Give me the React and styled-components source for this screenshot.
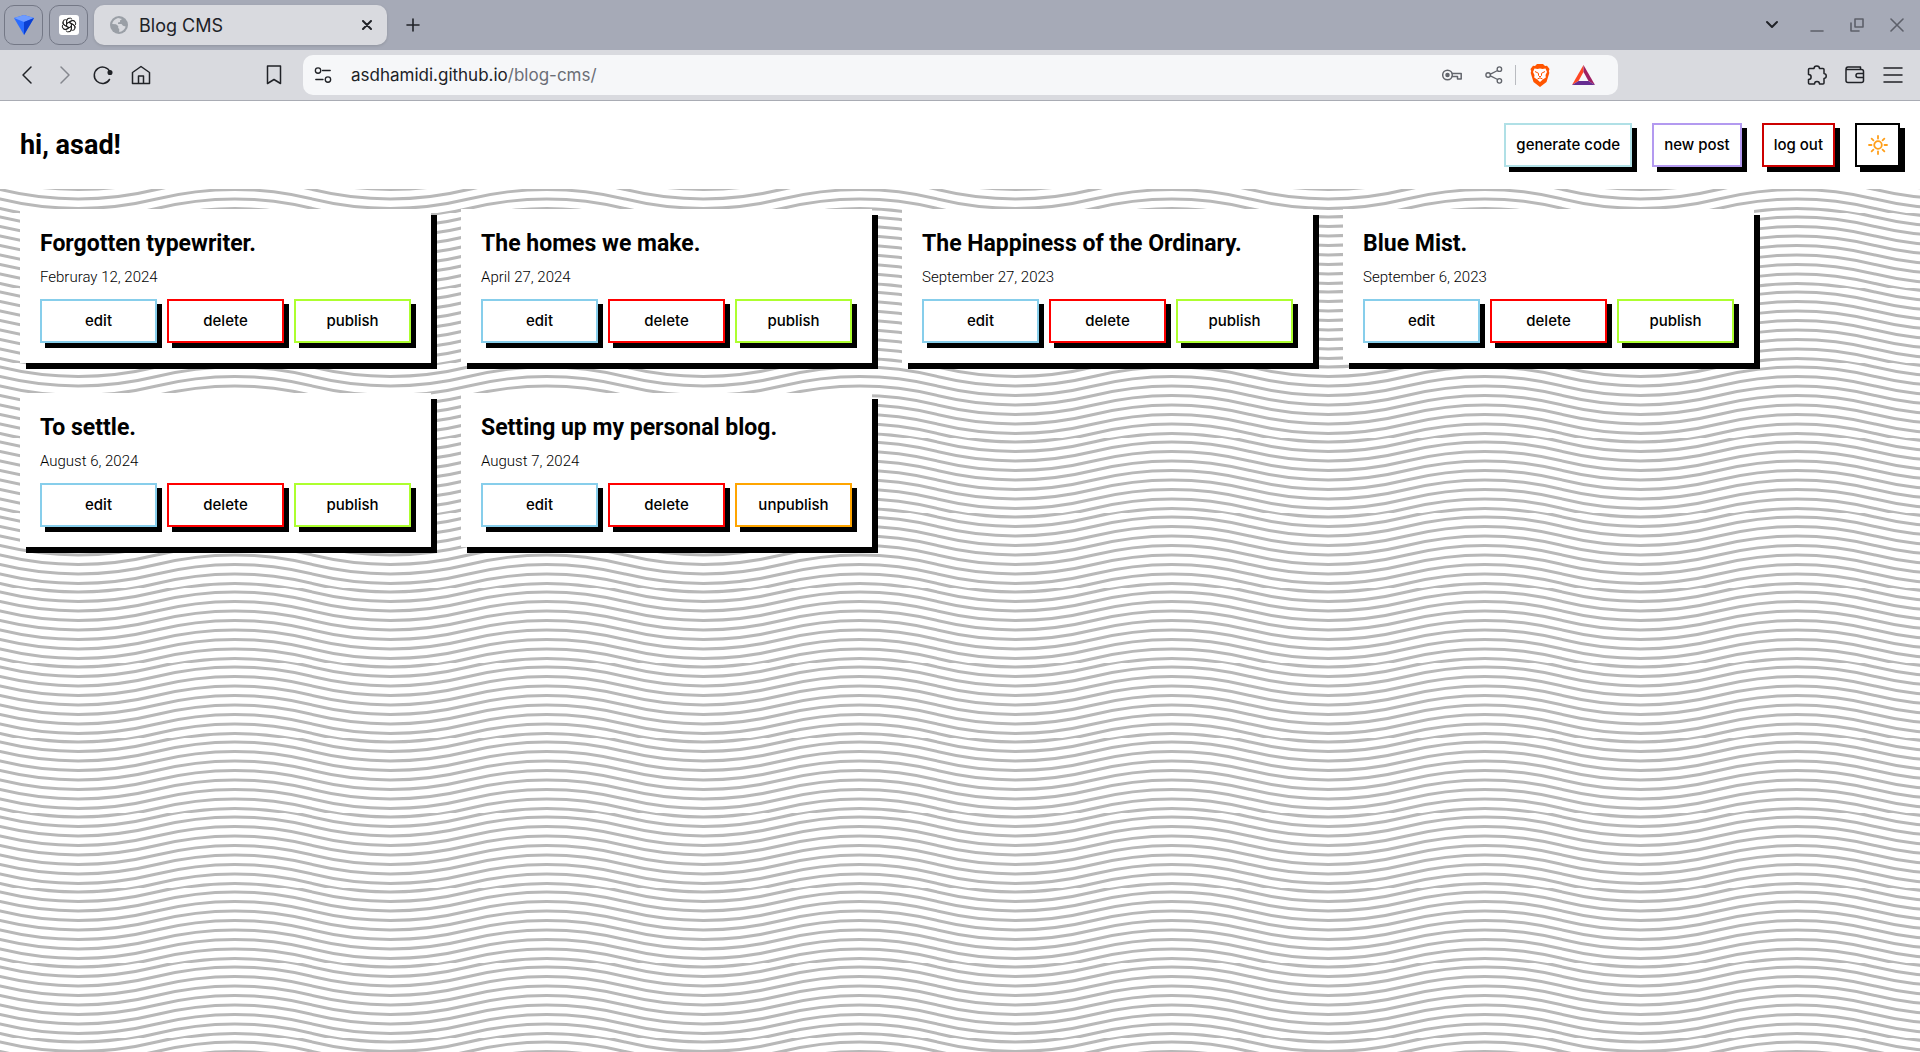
import React from "react";
import styled, { createGlobalStyle } from "styled-components";

const curves = Array.from({ length: 13 }, (_, i) => {
  const y = (4 + (i - 2) * 9.5) / 3.125;
  return `M-50 ${y}q25 -6.08 50 0t50 0t50 0t50 0`;
}).join("");
const waves = `url("data:image/svg+xml,${encodeURIComponent(
  `<svg xmlns='http://www.w3.org/2000/svg' width='100' height='24' viewBox='0 0 100 24'><path d='${curves}' fill='none' stroke='#b8b8b8' stroke-width='1'/></svg>`
)}")`;

const Global = createGlobalStyle`
  *, *::before, *::after { box-sizing: border-box; }
  body { margin: 0; background: #fff; color: #000; font-family: Roboto, "Liberation Sans", sans-serif; }
  button { font: inherit; color: inherit; }
  h1, h2, p { margin: 0; }
`;

const Window = styled.div`
  display: flex;
  flex-direction: column;
  min-height: 100vh;
`;

const TabStrip = styled.div`
  display: flex;
  align-items: center;
  height: 50px;
  padding: 0 4px;
  gap: 6px;
  background: #a6aab7;
  color: #202227;
`;

const PinnedTab = styled.button`
  display: grid;
  place-items: center;
  width: 39px;
  height: 40px;
  padding: 0;
  border: 1px solid #747886;
  border-radius: 10px;
  background: transparent;
`;

const Tab = styled.div`
  display: flex;
  align-items: center;
  gap: 11px;
  width: 293px;
  height: 40px;
  padding: 0 9px 0 16px;
  border-radius: 10px;
  background: #d9dadf;
  box-shadow: 0 1px 3px #0002;
  font: 18px Inter, sans-serif;
`;

const TabTitle = styled.span`
  flex: 1;
`;

const IconButton = styled.button`
  display: grid;
  place-items: center;
  width: ${(p) => p.$w || 38}px;
  height: 38px;
  padding: 0;
  border: 0;
  background: none;
  color: ${(p) => p.$color || "#202227"};
  svg { display: block; }
`;

const WindowControls = styled.div`
  display: flex;
  gap: 2px;
  margin-left: auto;
`;

const Toolbar = styled.div`
  display: flex;
  align-items: center;
  height: 51px;
  padding: 0 8px;
  border-bottom: 1px solid #a9acb4;
  background: #d9dadf;
`;

const BookmarkSlot = styled.div`
  margin-left: 95px;
  margin-right: 10px;
`;

const AddressBar = styled.div`
  display: flex;
  align-items: center;
  flex: 0 1 1315px;
  height: 40px;
  padding: 0 12px 0 1px;
  border-radius: 10px;
  background: #f6f7f9;
`;

const Address = styled.div`
  flex: 1;
  padding-left: 9px;
  font: 17px/24px Inter, sans-serif;
  color: #202227;
  span { color: #6b6e76; }
`;

const Divider = styled.div`
  width: 1px;
  height: 20px;
  margin-right: 4px;
  background: #b9bbc0;
`;

const ToolbarEnd = styled.div`
  display: flex;
  margin-left: auto;
`;

const Header = styled.header`
  display: flex;
  align-items: center;
  justify-content: space-between;
  height: 88px;
  padding: 0 20px;
  background: #fff;
`;

const Greeting = styled.h1`
  font-size: 27px;
  line-height: 36px;
`;

const Actions = styled.div`
  display: flex;
  gap: 20px;
`;

const Button = styled.button`
  display: grid;
  place-items: center;
  height: 44px;
  min-width: 45px;
  padding: 0 10px;
  border: 2px solid ${(p) => p.$color};
  background: #fff;
  box-shadow: 5px 5px 0 #000;
  font: 500 15px/20px Inter, sans-serif;
`;

const Posts = styled.main`
  flex: 1;
  display: grid;
  grid-template-columns: repeat(auto-fill, 411px);
  align-content: start;
  gap: 30px;
  padding: 20px;
  background: #fff ${waves} 0 24px / auto 75px;
`;

const Card = styled.article`
  display: flex;
  flex-direction: column;
  padding: 20px;
  background: #fff;
  box-shadow: 6px 6px 0 #000;
`;

const Title = styled.h2`
  font-size: 23px;
  line-height: 30px;
`;

const PostDate = styled.p`
  margin: 8px 0 12px;
  font-size: 15px;
  font-weight: 300;
  line-height: 20px;
`;

const CardActions = styled.div`
  display: grid;
  grid-template-columns: repeat(3, 1fr);
  gap: 10px;
`;

const Icon = ({ size = 20, width = 1.5, children, box = 20 }) => (
  <svg width={size} height={size} viewBox={`0 0 ${box} ${box}`} fill="none" stroke="currentColor" strokeWidth={width} strokeLinecap="round" strokeLinejoin="round" aria-hidden="true">
    {children}
  </svg>
);

const posts = [
  ["Forgotten typewriter.", "Februray 12, 2024", false],
  ["The homes we make.", "April 27, 2024", false],
  ["The Happiness of the Ordinary.", "September 27, 2023", false],
  ["Blue Mist.", "September 6, 2023", false],
  ["To settle.", "August 6, 2024", false],
  ["Setting up my personal blog.", "August 7, 2024", true],
];

function Post({ title, date, published }) {
  return (
    <Card>
      <Title>{title}</Title>
      <PostDate>{date}</PostDate>
      <CardActions>
        <Button $color="skyblue">edit</Button>
        <Button $color="red">delete</Button>
        <Button $color={published ? "orange" : "greenyellow"}>{published ? "unpublish" : "publish"}</Button>
      </CardActions>
    </Card>
  );
}

function Browser() {
  return (
    <>
      <TabStrip>
        <PinnedTab aria-label="Pinned tab">
          <svg width="20" height="20" viewBox="0 0 20 20">
            <path d="M0 3 10 0l10 3-10 17z" fill="#2a6cff" />
            <path d="M0 3 10 0l10 3-10 4z" fill="#6f9cff" />
            <path d="M20 3 10 7v13z" fill="#0b3fd0" />
          </svg>
        </PinnedTab>
        <PinnedTab aria-label="Pinned chat tab">
          <svg width="20" height="20" viewBox="0 0 20 20" fill="none" stroke="#222" strokeWidth="1">
            <rect width="20" height="20" rx="3" fill="#fff" stroke="none" />
            {[0, 60, 120, 180, 240, 300].map((a) => (
              <path key={a} transform={`rotate(${a} 10 10)`} d="M7.6 11.4V6.2a3.1 3.1 0 0 1 5.6-1.8M7.6 8.6l4.6-2.7a3 3 0 0 1 3.6.5" />
            ))}
          </svg>
        </PinnedTab>
        <Tab>
          <svg width="18" height="18" viewBox="0 0 18 18">
            <circle cx="9" cy="9" r="9" fill="#9a9fa6" />
            <path d="M8 2c-3 1-5.500 3-5.800 6l3.800.2L8.200 10v2l1 1v3c3-.3 5.800-2.800 6.400-5.500L13 9.700 11.500 8H8V6.500l2-.5V4.500L12 3z" fill="#d9dadf" />
          </svg>
          <TabTitle>Blog CMS</TabTitle>
          <IconButton $w={22} aria-label="Close tab">
            <Icon size={10} box={10} width={2}><path d="m1 1 8 8M9 1 1 9" /></Icon>
          </IconButton>
        </Tab>
        <IconButton $w={40} aria-label="New tab">
          <Icon size={14} box={14} width={1.6}><path d="M7 1v12M1 7h12" /></Icon>
        </IconButton>
        <WindowControls>
          <IconButton $w={48} aria-label="Search tabs"><Icon size={14} box={14} width={2}><path d="m2 4 5 5 5-5" /></Icon></IconButton>
          <IconButton $color="#5d606a" aria-label="Minimize"><Icon size={14} box={14} width={1.6}><path d="M1 13h12" /></Icon></IconButton>
          <IconButton $color="#5d606a" aria-label="Restore"><Icon size={14} box={14} width={1.6}><path d="M5 1h8v8H5zM1 5v8h8" /></Icon></IconButton>
          <IconButton $color="#5d606a" aria-label="Close"><Icon size={14} box={14} width={1.6}><path d="m1 1 12 12M13 1 1 13" /></Icon></IconButton>
        </WindowControls>
      </TabStrip>
      <Toolbar>
        <IconButton aria-label="Back"><Icon><path d="m14 2-8 8 8 8" /></Icon></IconButton>
        <IconButton $color="#85878e" aria-label="Forward"><Icon><path d="m6 2 8 8-8 8" /></Icon></IconButton>
        <IconButton aria-label="Reload"><Icon><path d="M17 7A8.200 8.200 0 1 0 16.500 14.500" /><circle cx="17" cy="7.500" r="1.800" fill="currentColor" /></Icon></IconButton>
        <IconButton aria-label="Home"><Icon><path d="M1.500 7.500 10 1.500l8.500 6v11h-17zM7.500 18v-7h5v7" /></Icon></IconButton>
        <BookmarkSlot>
          <IconButton aria-label="Bookmark"><Icon><path d="M3.500 1h13v17.500l-6.500-4-6.500 4z" /></Icon></IconButton>
        </BookmarkSlot>
        <AddressBar>
          <IconButton aria-label="Site information"><Icon size={18}><circle cx="4.500" cy="5" r="3" /><path d="M9.500 5H18M2 15h8" /><circle cx="15.500" cy="15" r="3" /></Icon></IconButton>
          <Address>asdhamidi.github.io<span>/blog-cms/</span></Address>
          <IconButton $w={42} $color="#62656c" aria-label="Passwords"><Icon><circle cx="5.500" cy="10" r="4.800" /><circle cx="5.500" cy="10" r="1.500" fill="currentColor" /><path d="M10.200 8.500h9v5.500h-3.700v-2.500h-5.300" /></Icon></IconButton>
          <IconButton $w={42} $color="#62656c" aria-label="Share"><Icon size={18}><circle cx="3.500" cy="10" r="2.500" /><circle cx="16" cy="3.500" r="2.500" /><circle cx="16" cy="16.500" r="2.500" /><path d="m6 9 8-4M6 11l8 4" /></Icon></IconButton>
          <Divider />
          <IconButton $w={40} aria-label="Shields">
            <svg width="20" height="23" viewBox="0 0 20 23">
              <path d="m5 2 2-2h6l2 2 2-.2L19.500 5l-.7 2 .5 2-2.800 9L10 23l-6.500-5L.7 9l.5-2-.7-2L3 1.800z" fill="#ff5500" />
              <path d="m4.500 4.500 3 .6L10 4.500l2.500.6 3-.6L17 8l-1.500 3 .3 2.500-3 2L10 18l-2.800-2.500-3-2 .3-2.500L3 8z" fill="#fff" />
              <path d="m5 7.500 3.500 1.800M15 7.500l-3.500 1.800M8.500 9.300v2.200L10 13l1.500-1.500V9.300M7.500 15l2.500-1.200 2.500 1.200" fill="none" stroke="#ff5500" strokeWidth="1" />
            </svg>
          </IconButton>
          <IconButton $w={46} aria-label="Rewards">
            <svg width="23" height="20" viewBox="0 0 23 20">
              <path d="M11.500 0 0 20l6.500-4 5-9z" fill="#ff4724" />
              <path d="M11.500 0 23 20l-6.500-4-5-9z" fill="#9e1f63" />
              <path d="M0 20h23l-6.500-4h-10z" fill="#662d91" />
            </svg>
          </IconButton>
        </AddressBar>
        <ToolbarEnd>
          <IconButton aria-label="Extensions"><Icon><path d="M2.500 3.500H7c0-3.500 5.500-3.500 5.500 0H16q1 0 1 1v4c3 .5 3 4.500 0 5V18q0 1-1 1h-3.500c0-3.500-5-3.500-5 0H2.500q-1 0-1-1v-3.500c3.500 0 3.500-5 0-5v-5q0-1 1-1z" /></Icon></IconButton>
          <IconButton aria-label="Wallet"><Icon><path d="M1 4.500h15.500q2 0 2 2v9q0 2-2 2H3q-2 0-2-2zM1 4.500Q1 2 3 2h12.500v2.500M18.500 8.500H13q-2 0-2 2t2 2h5.500" /></Icon></IconButton>
          <IconButton aria-label="Menu"><Icon><path d="M1 3h18M1 10h18M1 17h18" /></Icon></IconButton>
        </ToolbarEnd>
      </Toolbar>
    </>
  );
}

export default function App() {
  return (
    <Window>
      <Global />
      <Browser />
      <Header>
        <Greeting>hi, asad!</Greeting>
        <Actions>
          <Button $color="powderblue">generate code</Button>
          <Button $color="#b39af0">new post</Button>
          <Button $color="#cc0000">log out</Button>
          <Button $color="#000" aria-label="Light theme">
            <svg width="20" height="20" viewBox="0 0 20 20" fill="none" stroke="#ff9f1a" strokeWidth="1.800" strokeLinecap="round">
              <circle cx="10" cy="10" r="3.800" />
              {[0, 45, 90, 135, 180, 225, 270, 315].map((a) => <path key={a} d="M10 1v2.500" transform={`rotate(${a} 10 10)`} />)}
            </svg>
          </Button>
        </Actions>
      </Header>
      <Posts>
        {posts.map(([title, date, published]) => <Post key={title} title={title} date={date} published={published} />)}
      </Posts>
    </Window>
  );
}
